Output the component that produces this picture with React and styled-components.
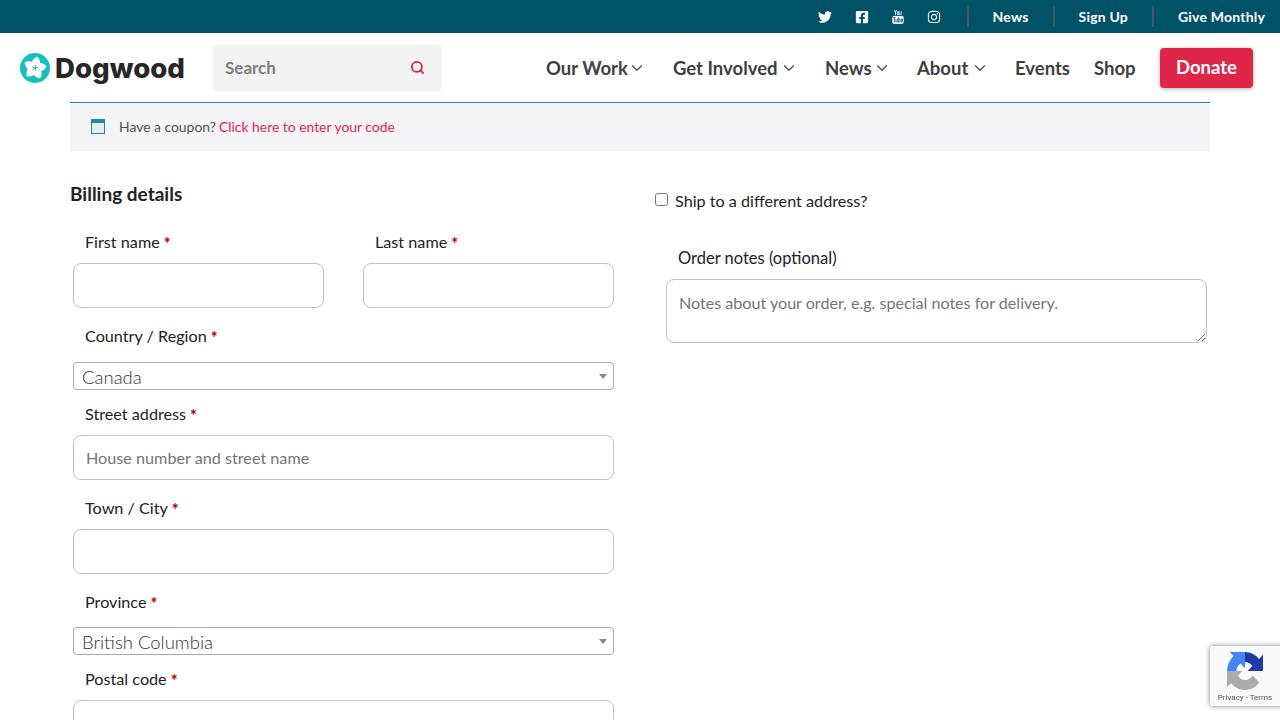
import React from "react";
import styled, { createGlobalStyle } from "styled-components";
import { FaTwitter, FaFacebookSquare, FaInstagram } from "react-icons/fa";
import { TfiYoutube } from "react-icons/tfi";
import { ChevronDown, Search } from "lucide-react";

const GlobalStyle = createGlobalStyle`
  html, body {
    margin: 0;
    height: 720px;
    overflow: hidden;
    background: #fff;
    font-family: "Lato", "Open Sans", sans-serif;
    color: #222;
  }
  * { box-sizing: border-box; }
`;

// top strip
const TopBar = styled.div`
  height: 33px;
  background: #005366;
  display: flex;
  align-items: center;
  justify-content: flex-end;
  padding-right: 15px;
`;

const SocialLink = styled.a`
  width: 36.4px;
  display: flex;
  justify-content: center;
  color: #fff;
  font-size: 14px;
`;

const TopLink = styled.a`
  color: #fff;
  font-size: 14px;
  font-weight: 700;
  letter-spacing: 0.2px;
  height: 21px;
  line-height: 21px;
  margin-left: ${(p) => p.$gap || 24}px;
  padding-left: 24px;
  border-left: 2px solid #4d5557;
`;

// main header
const Header = styled.header`
  height: 69px;
  display: flex;
  align-items: center;
  padding: 0 27px 0 20px;
`;

const Logo = styled.div`
  display: flex;
  align-items: center;
  gap: 5px;
  width: 193px;
`;

const LogoText = styled.span`
  font-family: "Inter", "Lato", sans-serif;
  font-size: 27.6px;
  font-weight: 800;
  color: #272727;
`;

const SearchBox = styled.div`
  width: 229px;
  height: 46px;
  background: #f3f3f3;
  border-radius: 4px;
  display: flex;
  align-items: center;
  justify-content: space-between;
  padding: 0 17px 0 12px;
  color: #808080;
  font-size: 17px;
  font-weight: 700;
  svg { color: #df2648; }
`;

const Nav = styled.nav`
  margin-left: auto;
  display: flex;
  align-items: center;
`;

const NavItem = styled.a`
  display: flex;
  align-items: center;
  width: ${(p) => p.$w}px;
  font-size: 18.5px;
  font-weight: 700;
  color: #404040;
  white-space: nowrap;
`;

const NavLabel = styled.span`
  width: ${(p) => p.$w}px;
`;

const DonateButton = styled.a`
  width: 93px;
  height: 40px;
  background: #df2648;
  color: #fff;
  border-radius: 4px;
  box-shadow: 0 1px 4px rgba(0, 0, 0, 0.3);
  display: flex;
  align-items: center;
  justify-content: center;
  padding-bottom: 2px;
  font-size: 18.5px;
  font-weight: 700;
`;

// page body
const Main = styled.main`
  padding: 0 70px;
`;

const Coupon = styled.div`
  height: 49px;
  background: #f5f5f7;
  border-top: 1px solid #1e85be;
  display: flex;
  align-items: center;
  padding: 0 0 1px 21px;
  font-size: 13.9px;
  color: #515151;
`;

const CouponIcon = styled.span`
  width: 14px;
  height: 15px;
  margin-right: 14px;
  background: #e6edf5;
  border: 1.5px solid #1e85be;
  border-top-width: 4px;
`;

const CouponLink = styled.a`
  color: #df2648;
  margin-left: 3px;
`;

const Columns = styled.div`
  display: grid;
  grid-template-columns: 585px 555px;
`;

const Billing = styled.section`
  padding-top: 32px;
`;

const Heading = styled.h3`
  margin: 0;
  font-size: 19px;
  line-height: 22px;
  font-weight: 700;
  color: #222;
`;

const Row = styled.div`
  display: grid;
  grid-template-columns: 251px 251px;
  gap: 39px;
`;

const Field = styled.div`
  width: ${(p) => (p.$half ? "251px" : "541px")};
  margin-left: ${(p) => (p.$half ? 0 : 3)}px;
`;

const Label = styled.label`
  display: block;
  height: 24px;
  line-height: 24px;
  padding-left: 12px;
  font-size: 16.2px;
  color: #222;
  margin-top: ${(p) => p.$top}px;
  margin-bottom: ${(p) => p.$bottom}px;
`;

const Req = styled.span`
  color: #b00000;
  font-weight: 700;
  margin-left: 4px;
  vertical-align: -2px;
`;

const TextInput = styled.input`
  display: block;
  width: 100%;
  height: 45px;
  border: 1px solid #bcc5cc;
  border-radius: 8px;
  padding: 0 12px;
  background: #fff;
  font-family: inherit;
  font-size: 16.2px;
  &::placeholder { color: #757575; opacity: 1; }
`;

const Select = styled.div`
  position: relative;
  height: 28px;
  border: 1px solid #aaa;
  border-radius: 4px;
  padding-left: 8px;
  font-size: 18.5px;
  font-weight: 300;
  line-height: 28px;
  color: #333;
  overflow: hidden;
  &::after {
    content: "";
    position: absolute;
    right: 6px;
    top: 11px;
    border-left: 4px solid transparent;
    border-right: 4px solid transparent;
    border-top: 5px solid #888;
  }
`;

const Shipping = styled.section`
  padding-top: 41px;
`;

const ShipLabel = styled.label`
  display: flex;
  align-items: center;
  font-size: 16.2px;
  line-height: 18px;
  color: #222;
  input {
    margin: 0 7px 0 0;
    width: 13px;
    height: 13px;
    position: relative;
    top: -2px;
  }
`;

const Notes = styled.div`
  margin-top: 36px;
  margin-left: 11px;
  width: 541px;
`;

const NotesLabel = styled.label`
  display: block;
  height: 24px;
  line-height: 24px;
  padding-left: 12px;
  margin-bottom: 9px;
  font-size: 16.5px;
  color: #222;
`;

const TextArea = styled.textarea`
  display: block;
  width: 541px;
  height: 64px;
  border: 1px solid #bcc5cc;
  border-radius: 8px;
  padding: 12px;
  font-family: inherit;
  font-size: 16.1px;
  line-height: 22px;
  &::placeholder { color: #757575; opacity: 1; }
`;

const Badge = styled.div`
  position: fixed;
  left: 1210px;
  top: 646px;
  width: 256px;
  height: 60px;
  background: #f9f9f9;
  border-radius: 2px;
  box-shadow: 0 0 5px rgba(0, 0, 0, 0.5);
`;

const BadgeMark = styled.div`
  width: 70px;
  height: 60px;
  display: flex;
  flex-direction: column;
  align-items: center;
  padding-top: 6px;
  color: #555;
  font-family: Roboto, sans-serif;
  font-size: 8px;
  white-space: nowrap;
  span { margin-top: 3px; }
`;

const DogwoodMark = () => (
  <svg width="30" height="30" viewBox="0 0 30 30">
    <circle cx="15" cy="15" r="15" fill="#16bfbf" />
    {[10, 82, 154, 226, 298].map((a) => (
      <path
        key={a}
        d="M15 15.500C10 13 8.800 8 15 3.200 21.200 8 20 13 15 15.500z"
        fill="#fff"
        transform={`rotate(${a} 15 15)`}
      />
    ))}
    {[10, 82, 154, 226, 298].map((a) => (
      <path
        key={a}
        d="M15 15V11.800"
        stroke="#16bfbf"
        strokeWidth="0.8"
        transform={`rotate(${a} 15 15)`}
      />
    ))}
    <circle cx="15" cy="15" r="1" fill="#16bfbf" />
  </svg>
);

// same arrow three times, each turned a quarter
const arrowPath =
  "M64 32V4.700L56.800 11.900A32 32 0 0 0 6.600 12.700L18.300 24.600A16 16 0 0 1 45 23.700L36.700 32Z";

const RecaptchaMark = () => (
  <svg width="36" height="38" viewBox="0 0 64 64" preserveAspectRatio="none">
    <path d={arrowPath} fill="#1c3aa9" />
    <path d={arrowPath} fill="#4285f4" transform="rotate(-90 32 32)" />
    <path d={arrowPath} fill="#ababab" transform="rotate(-180 32 32)" />
  </svg>
);

const navLinks = [
  { label: "Our Work", w: 127, text: 82, drop: true },
  { label: "Get Involved", w: 152, text: 107, drop: true },
  { label: "News", w: 92, text: 48, drop: true },
  { label: "About", w: 98, text: 53.5, drop: true },
  { label: "Events", w: 79 },
  { label: "Shop", w: 66 },
];

const App = () => {
  return (
    <>
      <GlobalStyle />
      <TopBar>
        <SocialLink><FaTwitter /></SocialLink>
        <SocialLink><FaFacebookSquare /></SocialLink>
        <SocialLink><TfiYoutube /></SocialLink>
        <SocialLink><FaInstagram /></SocialLink>
        <TopLink $gap={14}>News</TopLink>
        <TopLink>Sign Up</TopLink>
        <TopLink>Give Monthly</TopLink>
      </TopBar>
      <Header>
        <Logo>
          <DogwoodMark />
          <LogoText>Dogwood</LogoText>
        </Logo>
        <SearchBox>
          Search
          <Search size={15} strokeWidth={3} />
        </SearchBox>
        <Nav>
          {navLinks.map((link) => (
            <NavItem key={link.label} $w={link.w}>
              <NavLabel $w={link.text}>{link.label}</NavLabel>
              {link.drop && <ChevronDown size={18} strokeWidth={1.5} />}
            </NavItem>
          ))}
          <DonateButton>Donate</DonateButton>
        </Nav>
      </Header>
      <Main>
        <Coupon>
          <CouponIcon />
          Have a coupon?
          <CouponLink>Click here to enter your code</CouponLink>
        </Coupon>
        <Columns>
          <Billing>
            <Heading>Billing details</Heading>
            <Field>
              <Row>
                <Field $half>
                  <Label $top={25} $bottom={9}>First name<Req>*</Req></Label>
                  <TextInput />
                </Field>
                <Field $half>
                  <Label $top={25} $bottom={9}>Last name<Req>*</Req></Label>
                  <TextInput />
                </Field>
              </Row>
            </Field>
            <Field>
              <Label $top={16} $bottom={14}>Country / Region<Req>*</Req></Label>
              <Select>Canada</Select>
            </Field>
            <Field>
              <Label $top={12} $bottom={9}>Street address<Req>*</Req></Label>
              <TextInput placeholder="House number and street name" />
            </Field>
            <Field>
              <Label $top={16} $bottom={9}>Town / City<Req>*</Req></Label>
              <TextInput />
            </Field>
            <Field>
              <Label $top={16} $bottom={13}>Province<Req>*</Req></Label>
              <Select>British Columbia</Select>
            </Field>
            <Field>
              <Label $top={12} $bottom={9}>Postal code<Req>*</Req></Label>
              <TextInput />
            </Field>
          </Billing>
          <Shipping>
            <ShipLabel>
              <input type="checkbox" />
              Ship to a different address?
            </ShipLabel>
            <Notes>
              <NotesLabel>Order notes (optional)</NotesLabel>
              <TextArea placeholder="Notes about your order, e.g. special notes for delivery." />
            </Notes>
          </Shipping>
        </Columns>
      </Main>
      <Badge>
        <BadgeMark>
          <RecaptchaMark />
          <span>Privacy - Terms</span>
        </BadgeMark>
      </Badge>
    </>
  );
};

export default App;
